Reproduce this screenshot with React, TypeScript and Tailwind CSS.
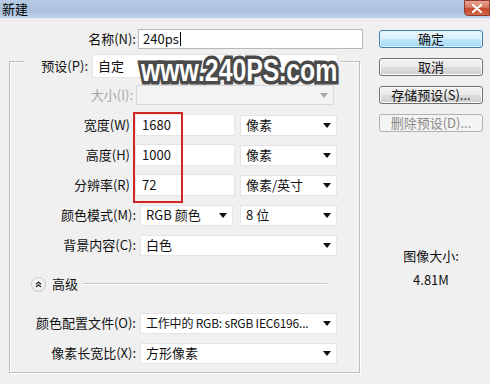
import React from "react";

function Arrow({ disabled }: { disabled?: boolean }) {
  return (
    <svg width="8" height="5" viewBox="0 0 8 5" className="shrink-0">
      <polygon points="0,0 8,0 4,5" fill={disabled ? "#a8a8a8" : "#111"} />
    </svg>
  );
}

function Select({ text, className, disabled, textClass }: { text?: string; className: string; disabled?: boolean; textClass?: string }) {
  return (
    <div
      className={`${className} flex items-center justify-between pl-[5px] pr-[5px] border ${
        disabled ? "bg-[#f3f3f3] border-[#dadada]" : "bg-white border-[#e4e4e4]"
      }`}
    >
      <span className={`leading-[16px] whitespace-nowrap ${textClass ?? ""}`}>{text}</span>
      <Arrow disabled={disabled} />
    </div>
  );
}

function Input({ text, className }: { text: string; className: string }) {
  return (
    <div className={`${className} h-[22px] flex items-center pl-[6px] bg-white border border-[#e4e4e4]`}>
      <span className="leading-[16px]">{text}</span>
    </div>
  );
}

function Row({ label, labelW, children, disabled }: { label: string; labelW: string; children: React.ReactNode; disabled?: boolean }) {
  return (
    <div className="h-[30px] flex items-center">
      <div className={`${labelW} text-right leading-[16px] whitespace-nowrap ${disabled ? "text-[#a6a6a6]" : "text-[#111]"}`}>
        {label}
      </div>
      {children}
    </div>
  );
}

function Btn({ text, kind }: { text: string; kind?: "focus" | "disabled" }) {
  const base = "h-[18px] w-[104px] rounded-[3px] flex items-center justify-center leading-[14px] border";
  const cls =
    kind === "focus"
      ? "border-[#3c7fb1] bg-[linear-gradient(#eaf6fd,#d9f0fc_50%,#bee6fd_50%,#a7d9f5)] [box-shadow:inset_0_0_0_1px_#e6f5fd] text-[#111]"
      : kind === "disabled"
      ? "border-[#adb2b5] bg-[#f4f4f4] text-[#8a8a8a]"
      : "border-[#707070] bg-[linear-gradient(#f2f2f2,#ebebeb_50%,#dddddd_50%,#cfcfcf)] [box-shadow:inset_0_0_0_1px_#fcfcfc] text-[#111]";
  return <div className={`${base} ${cls}`}>{text}</div>;
}

export default function App() {
  return (
    <div className="relative w-[490px] h-[384px] overflow-hidden bg-[#f0f0f0] text-[13px] text-[#111] font-['Noto_Sans_CJK_SC','Noto_Sans',sans-serif]">
      {/* title bar */}
      <div className="h-[18px] flex items-start justify-between bg-[linear-gradient(#b7cce4,#a9c1dc_60%,#bfd2e8)]">
        <span className="ml-[2px] leading-[18px] text-[13px] text-black">新建</span>
        <div className="w-[26px] h-[16px] rounded-bl-[4px] border border-[#8d3b2e] bg-[linear-gradient(#e8a593,#d47a62_45%,#c5462c_55%,#d46a4a)] flex items-center justify-center">
          <svg width="10" height="9" viewBox="0 0 10 9">
            <path d="M1 1 L9 8 M9 1 L1 8" stroke="#fff" strokeWidth="2.2" strokeLinecap="round" />
          </svg>
        </div>
      </div>
      <div className="h-[3px] bg-[#eaeef4]" />

      <div className="flex">
        {/* left column */}
        <div className="w-[370px]">
          <div className="mt-[8px] h-[20px] flex items-center">
            <div className="w-[136px] text-right leading-[16px]">名称(N):</div>
            <div className="ml-[2px] w-[225px] h-[20px] bg-white border border-[#b8b8b8] flex items-center pl-[4px]">
              <span className="leading-[16px]">240ps</span>
              <span className="w-px h-[14px] bg-black ml-[1px]" />
            </div>
          </div>

          {/* group box */}
          <div className="ml-[9px] mt-[12px] w-[351px] h-[312px] border border-[#bdbdbd] [box-shadow:inset_1px_1px_0_#fff,1px_1px_0_#fff]">
            <div className="-mt-[8px] ml-[14px] w-fit flex items-center bg-[#f0f0f0] pr-[2px]">
              <div className="w-[68px] text-right pr-[4px] leading-[16px]">预设(P):</div>
              <Select text="自定" className="w-[246px] h-[24px]" />
            </div>

            <div className="mt-[2px]">
              <Row label="大小(I):" labelW="w-[126px] pr-[3px]" disabled>
                <Select className="w-[198px] h-[20px]" disabled />
              </Row>
              <Row label="宽度(W)" labelW="w-[125px] pr-[5px]">
                <Input text="1680" className="w-[100px]" />
                <Select text="像素" className="ml-[5px] w-[97px] h-[21px]" />
              </Row>
              <Row label="高度(H)" labelW="w-[125px] pr-[5px]">
                <Input text="1000" className="w-[100px]" />
                <Select text="像素" className="ml-[5px] w-[97px] h-[21px]" />
              </Row>
              <Row label="分辨率(R)" labelW="w-[125px] pr-[5px]">
                <Input text="72" className="w-[100px]" />
                <Select text="像素/英寸" className="ml-[5px] w-[97px] h-[21px]" />
              </Row>
              <Row label="颜色模式(M):" labelW="w-[130px] pr-[4px]">
                <Select text="RGB 颜色" className="w-[93px] h-[21px]" />
                <Select text="8 位" className="ml-[7px] w-[97px] h-[21px]" />
              </Row>
              <Row label="背景内容(C):" labelW="w-[130px] pr-[4px]">
                <Select text="白色" className="w-[197px] h-[21px]" />
              </Row>
            </div>

            <div className="mt-[10px] h-[28px] flex items-center">
              <div className="ml-[21px] w-[15px] h-[15px] rounded-full border border-[#c8c8c8] bg-[radial-gradient(circle_at_40%_35%,#ffffff,#e4e4e4)] flex items-center justify-center">
                <svg width="7" height="7" viewBox="0 0 7 7">
                  <path d="M1 3.2 L3.5 1 L6 3.2 M1 6 L3.5 3.8 L6 6" stroke="#222" strokeWidth="1.2" fill="none" />
                </svg>
              </div>
              <span className="ml-[6px] leading-[16px]">高级</span>
              <div className="ml-[5px] mr-[32px] flex-1 h-[2px] border-t border-[#c4c4c4] border-b border-b-white" />
            </div>

            <div className="mt-[10px]">
              <Row label="颜色配置文件(O):" labelW="w-[130px] pr-[4px]">
                <Select text="工作中的 RGB: sRGB IEC6196..." textClass="text-[12px] tracking-[-0.2px]" className="w-[197px] h-[21px]" />
              </Row>
              <Row label="像素长宽比(X):" labelW="w-[130px] pr-[4px]">
                <Select text="方形像素" className="w-[197px] h-[21px]" />
              </Row>
            </div>
          </div>
        </div>

        {/* right column */}
        <div className="ml-[9px] w-[104px] flex flex-col">
          <div className="mt-[9px] flex flex-col gap-[10px]">
            <Btn text="确定" kind="focus" />
            <Btn text="取消" />
            <Btn text="存储预设(S)..." />
            <Btn text="删除预设(D)..." kind="disabled" />
          </div>
          <div className="mt-[115px] text-center leading-[18px]">图像大小:</div>
          <div className="mt-[6px] text-center leading-[18px]">4.81M</div>
        </div>
      </div>

      {/* red highlight */}
      <div className="absolute left-[133px] top-[112px] w-[50px] h-[91px] border-2 border-[#d02626]" />

      {/* watermark */}
      <div className="absolute left-[141px] top-[52px] origin-left scale-x-[0.8] text-[31px] font-bold leading-[38px] text-white font-['Liberation_Sans',Arial,sans-serif] [paint-order:stroke_fill] [-webkit-text-stroke:7px_#4a4a4a] whitespace-nowrap">
        www.240PS.com
      </div>
    </div>
  );
}
